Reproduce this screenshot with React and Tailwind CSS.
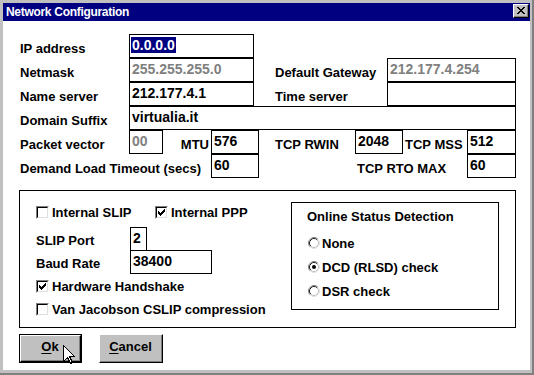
const Label = ({ className = '', children }) => (
  <div className={`pt-[7px] text-[13px] leading-[15px] font-bold whitespace-nowrap ${className}`}>{children}</div>
);

const Field = ({ className = '', gray, children }) => (
  <div
    className={`h-full border border-black pl-[2px] pt-[2px] text-[14px] leading-[16px] font-bold whitespace-nowrap ${
      gray ? 'text-[#808080]' : 'text-black'
    } ${className}`}
  >
    {children}
  </div>
);

const CheckMark = () => (
  <svg width="7" height="7" viewBox="0 0 7 7" shapeRendering="crispEdges">
    <rect x="0" y="2" width="1" height="3" fill="#000" />
    <rect x="1" y="3" width="1" height="3" fill="#000" />
    <rect x="2" y="4" width="1" height="3" fill="#000" />
    <rect x="3" y="3" width="1" height="3" fill="#000" />
    <rect x="4" y="2" width="1" height="3" fill="#000" />
    <rect x="5" y="1" width="1" height="3" fill="#000" />
    <rect x="6" y="0" width="1" height="3" fill="#000" />
  </svg>
);

const Checkbox = ({ checked, children }) => (
  <div className="flex items-center h-[18px]">
    <span className="w-[13px] h-[13px] shrink-0 border border-t-[#808080] border-l-[#808080] border-r-white border-b-white">
      <span className="w-full h-full flex items-center justify-center bg-white border border-t-black border-l-black border-r-[#dfdfdf] border-b-[#dfdfdf]">
        {checked && <CheckMark />}
      </span>
    </span>
    <span className="ml-[3px] text-[13px] leading-[15px] font-bold whitespace-nowrap">{children}</span>
  </div>
);

const Radio = ({ checked, children }) => (
  <div className="flex items-center h-[18px]">
    <svg width="12" height="12" viewBox="0 0 12 12" className="shrink-0">
      <path d="M9.89 2.11 A5.5 5.5 0 0 0 2.11 9.89" fill="none" stroke="#808080" strokeWidth="1" />
      <path d="M2.11 9.89 A5.5 5.5 0 0 0 9.89 2.11" fill="none" stroke="#e0e0e0" strokeWidth="1" />
      <path d="M9.18 2.82 A4.5 4.5 0 0 0 2.82 9.18" fill="none" stroke="#202020" strokeWidth="1" />
      <path d="M2.82 9.18 A4.5 4.5 0 0 0 9.18 2.82" fill="none" stroke="#c0c0c0" strokeWidth="1" />
      {checked && <circle cx="6" cy="6" r="2" fill="#000" />}
    </svg>
    <span className="ml-[2px] text-[13px] leading-[15px] font-bold whitespace-nowrap">{children}</span>
  </div>
);

export default function App() {
  return (
    <div className="relative w-[534px] h-[375px] bg-[#c0c0c0] border-r-2 border-b-2 border-r-[#808080] border-b-[#808080] font-['Liberation_Sans',Arial,sans-serif] text-black">
      <div className="w-full h-full flex flex-col pl-[3px] pt-[3px] pr-[2px] pb-[3px]">
        {/* title bar */}
        <div className="h-[18px] shrink-0 bg-[#000080] flex items-start justify-between pl-[3px]">
          <span className="text-white font-bold text-[12px] leading-[18px] tracking-[-0.3px]">Network Configuration</span>
          <div className="mt-[1px] mr-[1px] w-[16px] h-[14px] bg-[#c0c0c0] border border-t-white border-l-white border-r-black border-b-black">
            <div className="w-full h-full flex items-center justify-center border-r border-b border-r-[#808080] border-b-[#808080]">
              <svg width="8" height="7" viewBox="0 0 8 7" shapeRendering="crispEdges">
                <path d="M0.5 0 L7.5 7 M7.5 0 L0.5 7" stroke="#000" strokeWidth="1.6" />
              </svg>
            </div>
          </div>
        </div>

        {/* body */}
        <div className="flex-1 bg-white flex flex-col pt-[13px] pl-[17px]">
          <div className="flex h-[24px]">
            <Label className="w-[109px]">IP address</Label>
            <Field className="w-[125px] !pl-[1px]">
              <span className="bg-[#000080] text-white px-[1px]">0.0.0.0</span>
            </Field>
          </div>
          <div className="flex h-[24px]">
            <Label className="w-[109px]">Netmask</Label>
            <Field className="w-[125px]" gray>255.255.255.0</Field>
            <div className="w-[21px]" />
            <Label className="w-[112px]">Default Gateway</Label>
            <Field className="w-[129px]" gray>212.177.4.254</Field>
          </div>
          <div className="flex h-[24px]">
            <Label className="w-[109px]">Name server</Label>
            <Field className="w-[125px]">212.177.4.1</Field>
            <div className="w-[21px]" />
            <Label className="w-[112px]">Time server</Label>
            <Field className="w-[129px]" />
          </div>
          <div className="flex h-[24px]">
            <Label className="w-[109px]">Domain Suffix</Label>
            <Field className="w-[387px]">virtualia.it</Field>
          </div>
          <div className="flex h-[24px]">
            <Label className="w-[109px]">Packet vector</Label>
            <Field className="w-[34px]" gray>00</Field>
            <Label className="w-[48px] text-right pr-[2px]">MTU</Label>
            <Field className="w-[48px]">576</Field>
            <div className="w-[16px]" />
            <Label className="w-[80px]">TCP RWIN</Label>
            <Field className="w-[48px]">2048</Field>
            <Label className="w-[64px] pl-[2px]">TCP MSS</Label>
            <Field className="w-[49px]">512</Field>
          </div>
          <div className="flex h-[24px]">
            <Label className="w-[191px]">Demand Load Timeout (secs)</Label>
            <Field className="w-[48px]">60</Field>
            <div className="w-[96px]" />
            <Label className="w-[112px] pl-[2px]">TCP RTO MAX</Label>
            <Field className="w-[49px]">60</Field>
          </div>

          {/* SLIP / PPP group */}
          <div className="mt-[12px] -ml-px w-[497px] h-[138px] border border-black flex">
            <div className="w-[271px] flex flex-col pl-[16px] pt-[12px]">
              <div className="flex">
                <div className="w-[119px]">
                  <Checkbox>Internal SLIP</Checkbox>
                </div>
                <Checkbox checked>Internal PPP</Checkbox>
              </div>
              <div className="flex h-[24px] mt-[6px]">
                <Label className="w-[94px] !pt-[6px]">SLIP Port</Label>
                <Field className="w-[17px]">2</Field>
              </div>
              <div className="flex h-[24px] -mt-px">
                <Label className="w-[94px] !pt-[6px]">Baud Rate</Label>
                <Field className="w-[82px]">38400</Field>
              </div>
              <div className="mt-[3px]">
                <Checkbox checked>Hardware Handshake</Checkbox>
              </div>
              <div className="mt-[5px]">
                <Checkbox>Van Jacobson CSLIP compression</Checkbox>
              </div>
            </div>

            <div className="mt-[11px] w-[208px] h-[108px] border border-black flex flex-col pl-[15px] pt-[6px]">
              <div className="text-[13px] leading-[15px] font-bold">Online Status Detection</div>
              <div className="flex flex-col gap-[6px] mt-[10px] pl-[1px]">
                <Radio>None</Radio>
                <Radio checked>DCD (RLSD) check</Radio>
                <Radio>DSR check</Radio>
              </div>
            </div>
          </div>

          {/* buttons */}
          <div className="flex gap-[17px] mt-[6px] -ml-px">
            <div className="w-[63px] h-[29px] border border-black bg-[#c0c0c0]">
              <div className="w-full h-full border border-t-white border-l-white border-r-black border-b-black">
                <div className="w-full h-full flex items-center justify-center pb-[4px] border-r border-b border-r-[#808080] border-b-[#808080] text-[13px] leading-[15px] font-bold">
                  <span><u className="underline-offset-2">O</u>k</span>
                </div>
              </div>
            </div>
            <div className="w-[64px] h-[29px] bg-[#c0c0c0] border border-t-white border-l-white border-r-black border-b-black">
              <div className="w-full h-full flex items-center justify-center pb-[4px] border-r border-b border-r-[#808080] border-b-[#808080] text-[13px] leading-[15px] font-bold">
                <span><u className="underline-offset-2">C</u>ancel</span>
              </div>
            </div>
          </div>
        </div>
      </div>

      {/* mouse pointer over the Ok button */}
      <svg className="absolute left-[63px] top-[345px]" width="13" height="20" viewBox="0 0 13 20" shapeRendering="crispEdges">
        <polygon points="0.5,0.5 0.5,16.5 4.5,12.5 7.5,18.5 9.5,17.5 6.5,11.5 11.5,11.5" fill="#fff" stroke="#000" strokeWidth="1" />
      </svg>
    </div>
  );
}
